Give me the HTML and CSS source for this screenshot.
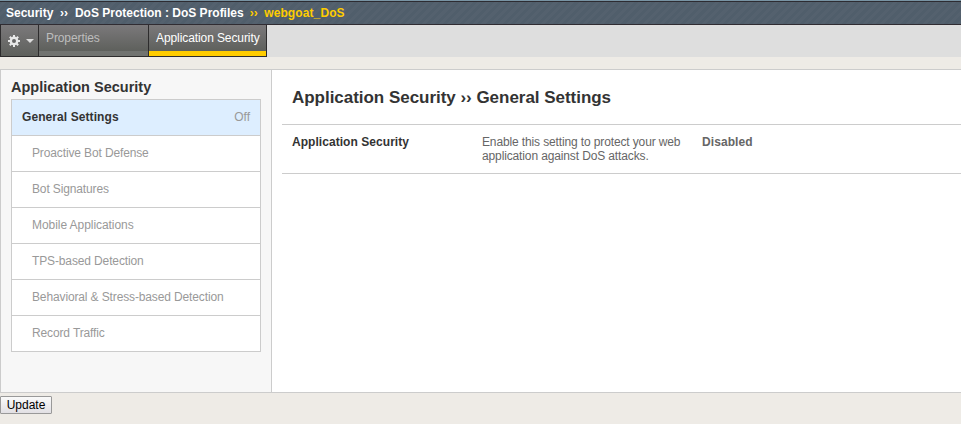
FILE: index.html
```html
<!DOCTYPE html>
<html lang="en">
<head>
<meta charset="utf-8">
<title>DoS Profiles</title>
<link rel="stylesheet" href="styles.css">
</head>
<body>
<header class="crumbs">
  <span class="crumb">Security</span><span class="sep">››</span><span class="crumb">DoS Protection : DoS Profiles</span><span class="sep current">››</span><span class="crumb current">webgoat_DoS</span>
</header>
<nav class="tabs">
  <div class="tab gear">
    <svg width="14" height="14" viewBox="0 0 14 14"><g stroke="#e8e8e8" stroke-width="2"><path d="M7 1v12M1 7h12M2.8 2.8l8.4 8.4M11.2 2.8l-8.4 8.4"/></g><circle cx="7" cy="7" r="3.2" fill="#666" stroke="#e8e8e8" stroke-width="2.4"/></svg>
    <svg width="8" height="4" viewBox="0 0 8 4"><path d="M0 0h8L4 4z" fill="#ddd"/></svg>
  </div>
  <div class="tab properties">Properties</div>
  <div class="tab active">Application Security</div>
</nav>
<main class="panel">
  <aside class="side">
    <h2>Application Security</h2>
    <ul>
      <li class="selected"><span>General Settings</span><span class="state">Off</span></li>
      <li>Proactive Bot Defense</li>
      <li>Bot Signatures</li>
      <li class="wide">Mobile Applications</li>
      <li>TPS-based Detection</li>
      <li>Behavioral &amp; Stress-based Detection</li>
      <li>Record Traffic</li>
    </ul>
  </aside>
  <section class="content">
    <h1>Application Security ›› General Settings</h1>
    <div class="setting">
      <div class="name">Application Security</div>
      <div class="desc">Enable this setting to protect your web application against DoS attacks.</div>
      <div class="value">Disabled</div>
    </div>
  </section>
</main>
<button class="update">Update</button>
</body>
</html>
```
FILE: styles.css
```css
* { box-sizing: border-box; }
body {
  margin: 0;
  height: 424px;
  overflow: hidden;
  background: #eeebe6;
  font: 12px/14px "Liberation Sans", Arial, sans-serif;
  color: #333;
}
.crumbs {
  height: 25px;
  padding: 5px 6px 0;
  display: flex;
  line-height: 16px;
  font-weight: bold;
  color: #fff;
  white-space: nowrap;
  background:
    linear-gradient(#7893a3 0 1px, #2d2c32 1px 2px, transparent 2px 24px, #302c32 24px),
    repeating-linear-gradient(135deg, #505e6b 0 3px, #54616e 3px 6px);
}
.crumb.current { letter-spacing: 0.1px; }
.sep { margin: 0 7px 0 6.6px; }
.sep.current { margin: 0 6.6px 0 6px; }
.current { color: #ffcc00; }
.tabs {
  height: 32px;
  display: flex;
  background: #dedede;
}
.tab {
  height: 32px;
  padding: 5px 6px 0;
  border-right: 1px solid #2d2c2d;
  border-bottom: 1px solid #2d2c2d;
  background: linear-gradient(#7b797b, #5e605c 26px, #717370 26px);
  line-height: 16px;
  color: #bdbdbd;
  white-space: nowrap;
}
.gear {
  width: 39px;
  border-left: 1px solid #2d2c2d;
  display: flex;
  align-items: center;
  gap: 5px;
  padding: 1px 0 0 6px;
  background: linear-gradient(#7b797b, #5e605c);
}
.properties { width: 110px; padding-left: 7px; letter-spacing: -0.1px; }
.active {
  width: 118px;
  padding-left: 7px;
  letter-spacing: -0.09px;
  color: #fff;
  background: linear-gradient(#7b797b, #5e605c 26px, #ffcc00 26px);
}
.panel {
  display: flex;
  height: 324px;
  margin-top: 12px;
  border: 1px solid #ccc;
  border-right: 0;
  background: #fff;
}
.side {
  width: 271px;
  padding: 8px 10px;
  border-right: 1px solid #ccc;
  background: #f7f7f7;
}
h2 { margin: 0; font-size: 14.5px; line-height: 18px; }
ul { width: 250px; margin: 3px 0 0; padding: 0; list-style: none; border: 1px solid #ccc; background: #fff; }
li { height: 36px; padding: 10px 10px 0 20px; color: #999; border-bottom: 1px solid #ccc; letter-spacing: -0.13px; }
li:last-child { height: 35px; border-bottom: 0; }
.wide { letter-spacing: -0.06px; }
.selected { display: flex; justify-content: space-between; padding-left: 10px; background: #def; color: #333; font-weight: bold; letter-spacing: 0.08px; }
.state { color: #999; font-weight: normal; letter-spacing: 0; }
.content { flex: 1; padding-left: 10px; }
h1 { margin: 0; height: 54px; padding: 18px 10px 0; font-size: 17px; line-height: 20px; letter-spacing: -0.03px; }
.setting { display: flex; height: 50px; padding: 10px 10px 0; border: solid #ccc; border-width: 1px 0; }
.name { width: 190px; font-weight: bold; letter-spacing: 0.05px; }
.desc { width: 220px; padding-right: 15px; color: #666; letter-spacing: -0.13px; }
.value { font-weight: bold; color: #666; letter-spacing: 0.08px; }
.update {
  display: block;
  width: 52px;
  height: 18px;
  margin-top: 3px;
  padding: 0;
  border: 1px solid #999;
  border-radius: 1px;
  background: linear-gradient(#fafafa, #e2e0e4);
  font: 12px/14px "Liberation Sans", Arial, sans-serif;
  color: #000;
}
```
